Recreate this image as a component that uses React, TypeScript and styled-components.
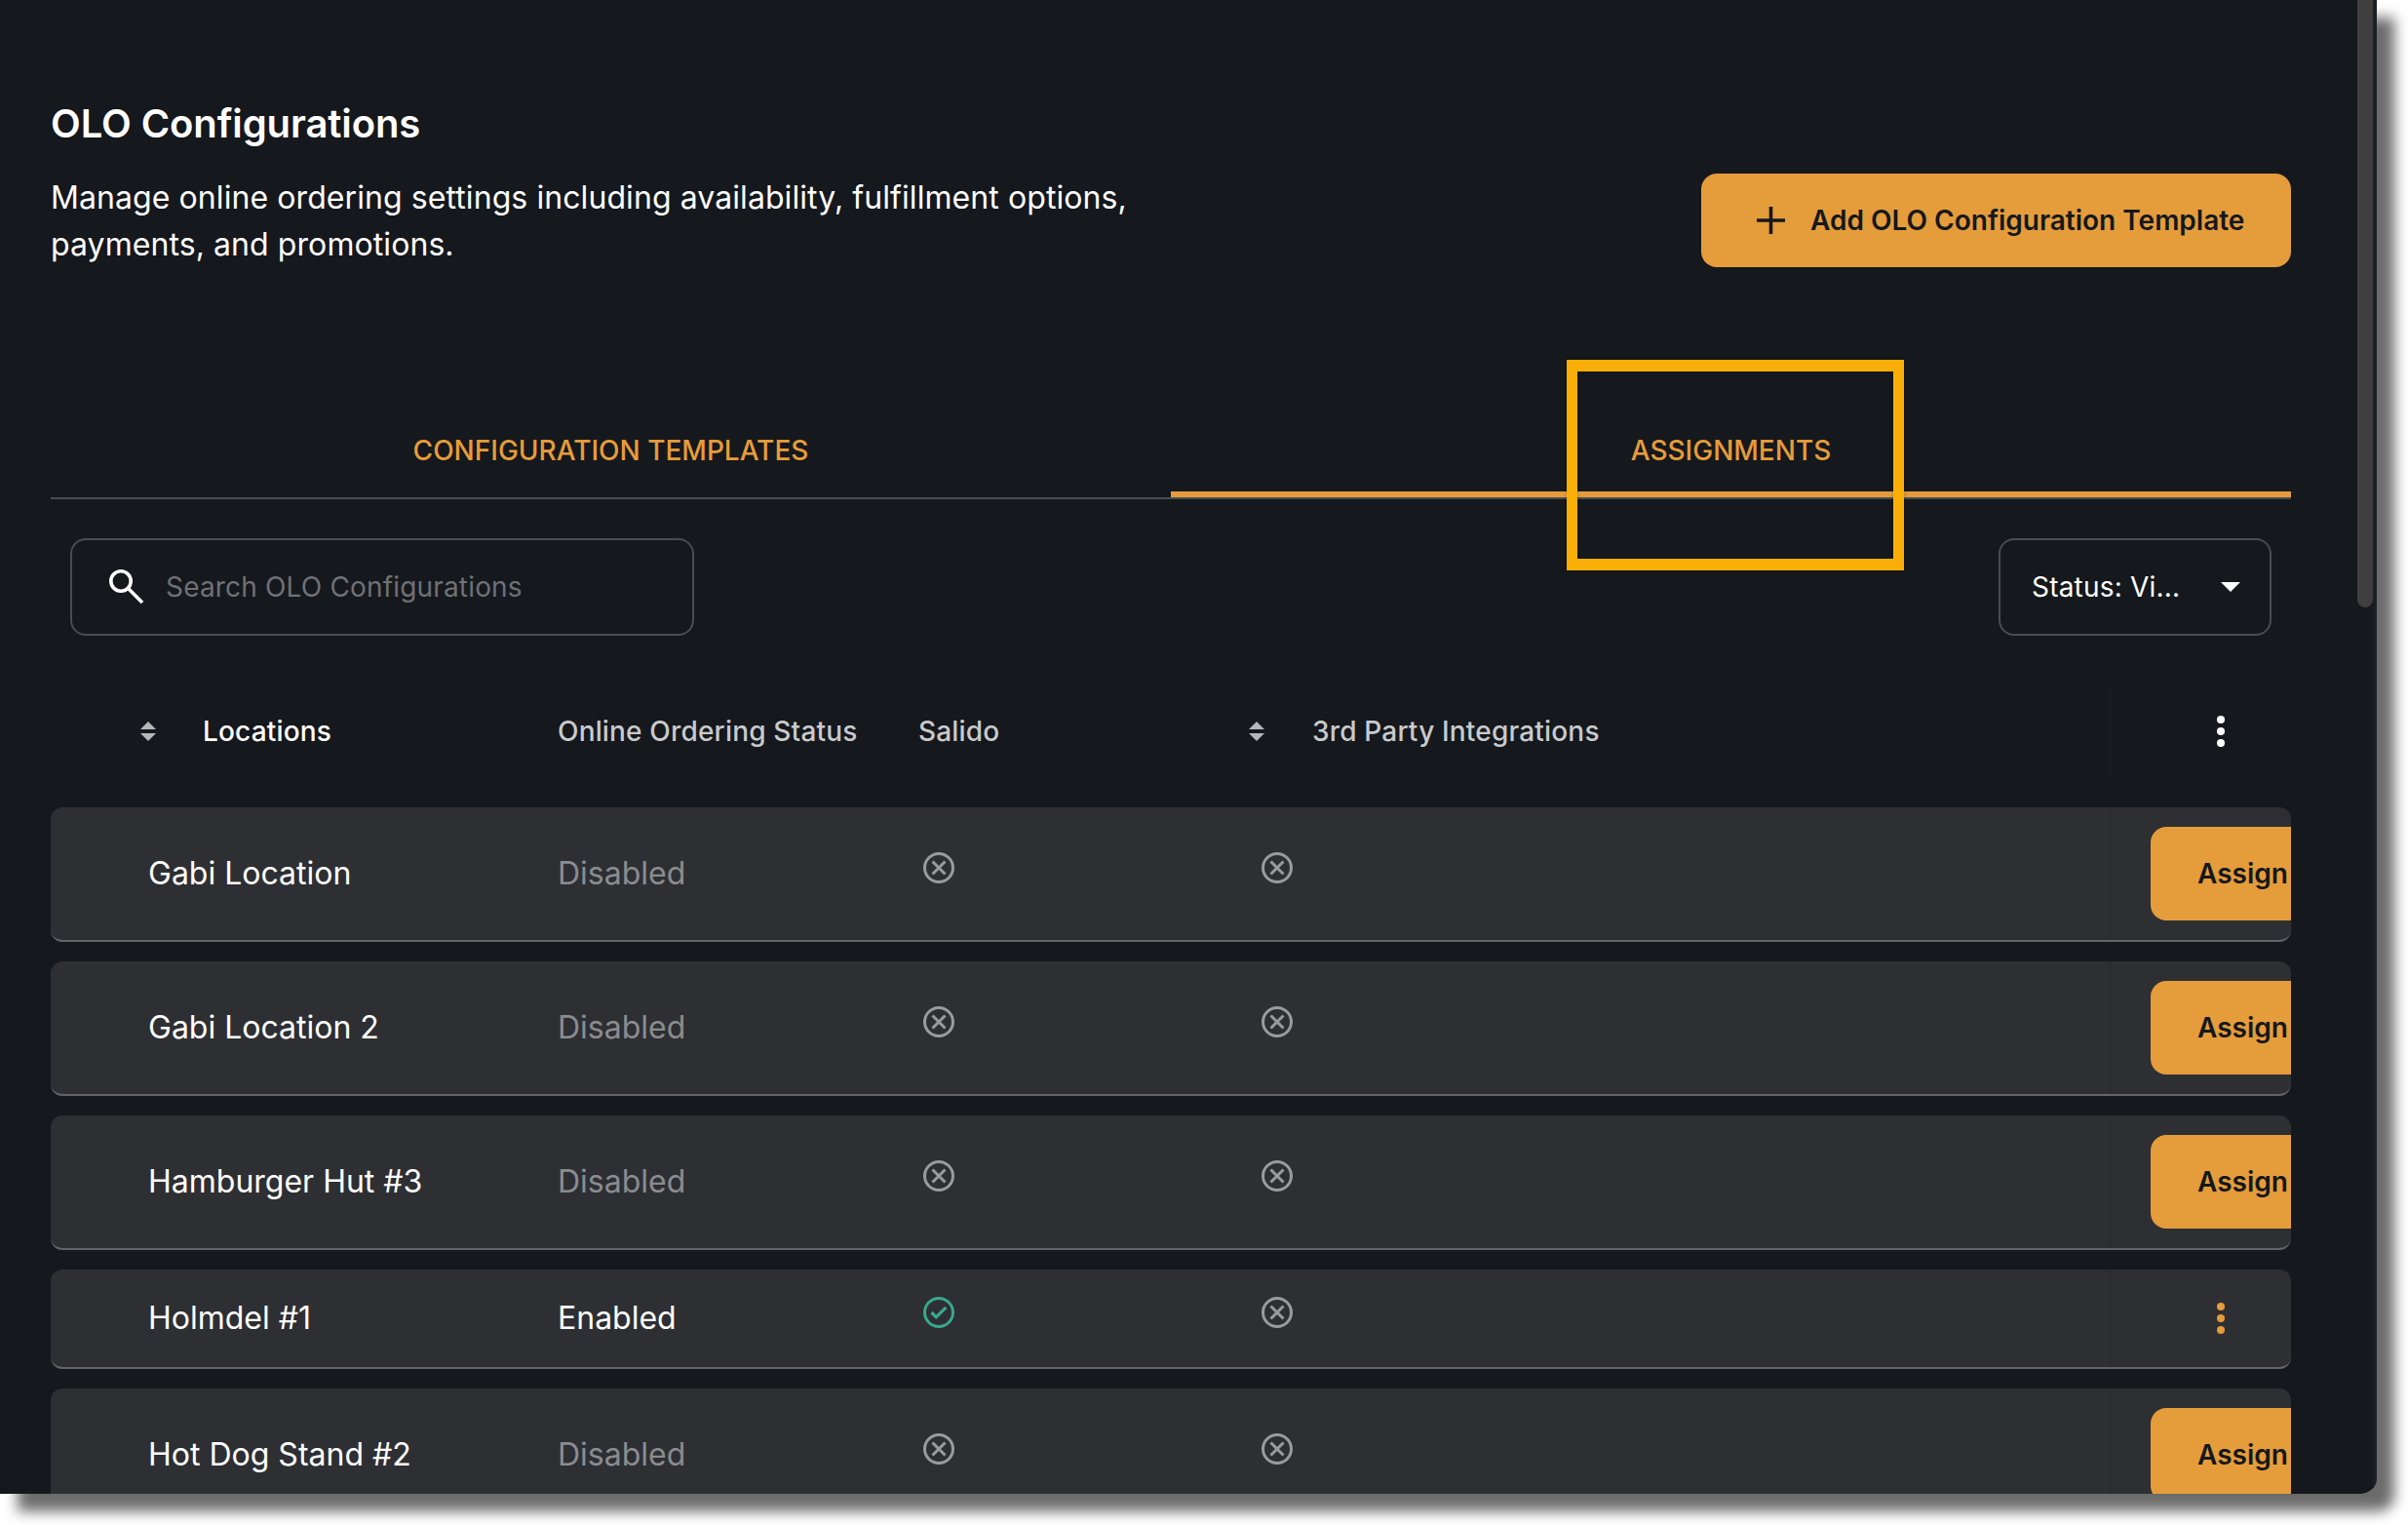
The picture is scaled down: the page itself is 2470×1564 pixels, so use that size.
import React from "react";
import styled, { createGlobalStyle } from "styled-components";

const Global = createGlobalStyle`
  html, body { margin: 0; padding: 0; background: #fff; }
  * { box-sizing: border-box; }
  body { font-family: "Inter", "Liberation Sans", sans-serif; }
`;

const Stage = styled.div`
  width: 2470px;
  height: 1564px;
  overflow: hidden;
`;

const ShadowWrap = styled.div`
  width: 2438px;
  height: 1532px;
  border-bottom-right-radius: 16px;
  box-shadow: 18px 18px 14px rgba(0, 0, 0, 0.58);
`;

const Panel = styled.main`
  position: relative;
  width: 2438px;
  height: 1532px;
  overflow: hidden;
  background: #15181d;
  border-bottom-right-radius: 16px;
  padding: 100px 88px 0 52px;
  color: #fff;
`;

const Header = styled.header`
  display: flex;
  justify-content: space-between;
  align-items: flex-end;
`;

const Title = styled.h1`
  margin: 0;
  font-size: 40px;
  line-height: 54px;
  font-weight: 600;
  letter-spacing: -0.1px;
`;

const Description = styled.p`
  margin: 25px 0 0;
  width: 1180px;
  font-size: 32px;
  line-height: 47.5px;
  font-weight: 400;
  letter-spacing: 0.08px;
`;

const PrimaryButton = styled.button`
  display: flex;
  align-items: center;
  height: 96px;
  width: 605px;
  padding: 0 0 0 57px;
  gap: 26px;
  border: 0;
  border-radius: 16px;
  background: #e59c3b;
  color: #15181d;
  font: 600 28px "Inter", sans-serif;
`;

const Tabs = styled.nav`
  display: grid;
  grid-template-columns: 1149px 1149px;
  height: 100px;
  margin-top: 138px;
  border-bottom: 2px solid #4a4c50;
`;

const Tab = styled.div<{ $active?: boolean }>`
  position: relative;
  display: flex;
  align-items: center;
  justify-content: center;
  height: 100px;
  color: #e59c3b;
  font-size: 28px;
  font-weight: 500;
  ${(p) =>
    p.$active
      ? `&::after {
          content: "";
          position: absolute;
          left: 0;
          right: 0;
          bottom: 2px;
          height: 6px;
          background: #e59c3b;
        }`
      : ""}
`;

const Toolbar = styled.div`
  display: flex;
  justify-content: space-between;
  margin-top: 40px;
  padding: 0 20px;
`;

const Search = styled.div`
  display: flex;
  align-items: center;
  width: 640px;
  height: 100px;
  padding-left: 38px;
  gap: 22px;
  border: 2px solid #4a4c50;
  border-radius: 16px;
  color: #6f7175;
  font-size: 28px;
  letter-spacing: 0.17px;
`;

const Select = styled.div`
  display: flex;
  align-items: center;
  width: 280px;
  height: 100px;
  padding-left: 32px;
  border: 2px solid #4a4c50;
  border-radius: 16px;
  color: #fff;
  font-size: 28px;
  letter-spacing: 0.2px;
`;

const SelectText = styled.span`
  width: 194px;
`;

const grid = "grid-template-columns: 520px 370px 339px 882px 187px;";

const HeaderRow = styled.div`
  display: grid;
  ${grid}
  height: 100px;
  margin-top: 48px;
  margin-bottom: 28px;
  align-items: stretch;
  font-size: 28px;
  font-weight: 500;
  letter-spacing: 0.17px;
  color: #c9cacb;
`;

const HeadCell = styled.div<{ $white?: boolean }>`
  display: flex;
  align-items: center;
  color: ${(p) => (p.$white ? "#fff" : "#c9cacb")};
`;

const SortCell = styled(HeadCell)<{ $left: number; $gap: number }>`
  padding-left: ${(p) => p.$left}px;
  gap: ${(p) => p.$gap}px;
`;

const Rows = styled.div`
  display: flex;
  flex-direction: column;
  gap: 20px;
`;

const Row = styled.div<{ $compact?: boolean }>`
  display: grid;
  ${grid}
  min-height: ${(p) => (p.$compact ? "102px" : "138px")};
  flex-shrink: 0;
  align-items: stretch;
  background: #2e2f33;
  border-bottom: 2px solid #636468;
  border-radius: 12px;
  overflow: hidden;
`;

const NameCell = styled.div`
  display: flex;
  align-items: center;
  padding: 0 0 1px 100px;
  font-size: 32px;
  color: #fff;
`;

const StatusCell = styled.div<{ $on: boolean }>`
  display: flex;
  align-items: center;
  padding-bottom: 1px;
  font-size: 32px;
  color: ${(p) => (p.$on ? "#fff" : "#8b8c8f")};
`;

const IconCell = styled.div<{ $left: number }>`
  display: flex;
  align-items: center;
  padding-left: ${(p) => p.$left}px;
  padding-bottom: 12px;
`;

const ActionCell = styled.div`
  display: flex;
  align-items: center;
  padding-left: 41px;
  border-left: 2px solid #2a2b2f;
  overflow: hidden;
`;

const HeadAction = styled(ActionCell)`
  padding-left: 109px;
  border-left-color: #191b20;
`;

const DotsSlot = styled.div`
  padding-left: 68px;
  display: flex;
`;

const AssignButton = styled.button`
  flex: none;
  display: flex;
  align-items: center;
  width: 190px;
  height: 96px;
  padding: 0 0 0 48px;
  border: 0;
  border-radius: 16px;
  background: #e59c3b;
  color: #15181d;
  font: 600 28px "Inter", sans-serif;
`;

const Scrollbar = styled.div`
  position: absolute;
  top: 0;
  right: 4px;
  width: 16px;
  height: 623px;
  background: #3f3f3f;
  border-radius: 0 0 8px 8px;
`;

const ScrollTrack = styled.div`
  position: absolute;
  top: 0;
  right: 0;
  width: 4px;
  height: 100%;
  background: #1c1f26;
`;

const Annotation = styled.div`
  position: absolute;
  left: 1607px;
  top: 369px;
  width: 346px;
  height: 216px;
  border: solid #f9ae08;
  border-width: 12px 11px;
  box-shadow: 0 0 4px rgba(0, 0, 0, 0.25), inset 0 0 4px rgba(0, 0, 0, 0.25);
`;

const CrossIcon = () => (
  <svg width="32" height="32" viewBox="0 0 32 32" fill="none" stroke="#9a9b9d" strokeWidth="3">
    <circle cx="16" cy="16" r="14.5" />
    <path d="M9.5 9.5 L22.5 22.5 M22.5 9.5 L9.5 22.5" />
  </svg>
);

const CheckIcon = () => (
  <svg width="32" height="32" viewBox="0 0 32 32" fill="none" stroke="#38a98a" strokeWidth="3">
    <circle cx="16" cy="16" r="14.5" />
    <path d="M8.5 16 L13.3 20.8 L23.3 10.8" strokeWidth="3.2" />
  </svg>
);

const SortIcon = () => (
  <svg width="16" height="20" viewBox="0 0 16 20" fill="#b6b7b9">
    <path d="M8 0 L16 8 H0 Z M0 12 H16 L8 20 Z" />
  </svg>
);

const Dots = ({ color }: { color: string }) => (
  <svg width="8" height="32" viewBox="0 0 8 32" fill={color}>
    <circle cx="4" cy="4" r="4" />
    <circle cx="4" cy="16" r="4" />
    <circle cx="4" cy="28" r="4" />
  </svg>
);

const PlusIcon = () => (
  <svg width="29" height="28" viewBox="0 0 29 28" stroke="#15181d" strokeWidth="3.6">
    <path d="M14.5 0 V28 M0 14 H29" />
  </svg>
);

const SearchIcon = () => (
  <svg width="36" height="36" viewBox="0 0 36 36" fill="none" stroke="#fff">
    <circle cx="12" cy="12" r="10.2" strokeWidth="3.6" />
    <path d="M19.5 19.5 L34 34" strokeWidth="3.6" />
  </svg>
);

const Caret = () => (
  <svg width="20" height="10" viewBox="0 0 20 10" fill="#fff">
    <path d="M0 0 H20 L10 10 Z" />
  </svg>
);

type RowData = { name: string; on: boolean };
const data: RowData[] = [
  { name: "Gabi Location", on: false },
  { name: "Gabi Location 2", on: false },
  { name: "Hamburger Hut #3", on: false },
  { name: "Holmdel #1", on: true },
  { name: "Hot Dog Stand #2", on: false },
];

export default function App() {
  return (
    <Stage>
      <Global />
      <ShadowWrap>
        <Panel>
          <Header>
            <div>
              <Title>OLO Configurations</Title>
              <Description>
                Manage online ordering settings including availability, fulfillment options, payments, and promotions.
              </Description>
            </div>
            <PrimaryButton>
              <PlusIcon />
              Add OLO Configuration Template
            </PrimaryButton>
          </Header>
          <Tabs>
            <Tab>CONFIGURATION TEMPLATES</Tab>
            <Tab $active>ASSIGNMENTS</Tab>
          </Tabs>
          <Toolbar>
            <Search>
              <SearchIcon />
              Search OLO Configurations
            </Search>
            <Select>
              <SelectText>Status: Vi...</SelectText>
              <Caret />
            </Select>
          </Toolbar>
          <HeaderRow>
            <SortCell $white $left={92} $gap={48}>
              <SortIcon />
              Locations
            </SortCell>
            <HeadCell>Online Ordering Status</HeadCell>
            <HeadCell>Salido</HeadCell>
            <SortCell $left={0} $gap={49}>
              <SortIcon />
              3rd Party Integrations
            </SortCell>
            <HeadAction>
              <Dots color="#fff" />
            </HeadAction>
          </HeaderRow>
          <Rows>
            {data.map((r) => (
              <Row key={r.name} $compact={r.on}>
                <NameCell>{r.name}</NameCell>
                <StatusCell $on={r.on}>{r.on ? "Enabled" : "Disabled"}</StatusCell>
                <IconCell $left={5}>{r.on ? <CheckIcon /> : <CrossIcon />}</IconCell>
                <IconCell $left={13}>
                  <CrossIcon />
                </IconCell>
                <ActionCell>
                  {r.on ? (
                    <DotsSlot>
                      <Dots color="#e59c3b" />
                    </DotsSlot>
                  ) : (
                    <AssignButton>Assign</AssignButton>
                  )}
                </ActionCell>
              </Row>
            ))}
          </Rows>
          <ScrollTrack />
          <Scrollbar />
          <Annotation />
        </Panel>
      </ShadowWrap>
    </Stage>
  );
}
